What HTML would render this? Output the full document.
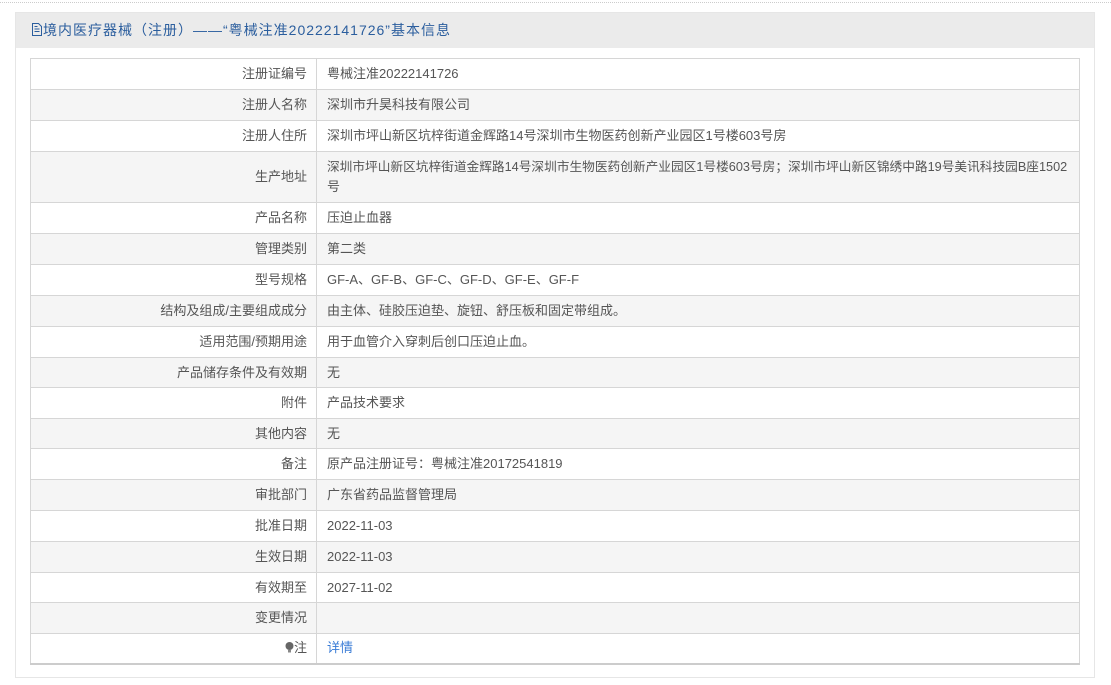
<!DOCTYPE html>
<html><head><meta charset="utf-8"><style>
*{margin:0;padding:0;box-sizing:border-box}
html,body{width:1111px;height:685px;background:#fff;overflow:hidden;font-family:"Liberation Sans","Noto Sans CJK SC",sans-serif;font-size:13px;color:#555}
.dot{position:absolute;left:0;top:2px;width:1111px;border-top:1px dotted #ccc}
.panel{position:absolute;left:15px;top:12px;width:1080px;height:666px;border:1px solid #e6e6e6;background:#fff}
.hd{height:35px;background:#ebebeb;color:#2b5e9e;font-size:14px;line-height:35px;padding-left:15px;letter-spacing:1px}
table{position:absolute;left:14px;top:45px;width:1050px;border-collapse:collapse;table-layout:fixed}
td{border:1px solid #d6d6d6;padding:0 10px;line-height:20px;vertical-align:middle;overflow:visible}
td.k{text-align:right;padding-right:9px}
tr:nth-child(even) td{background:#f5f5f5}
table{border-bottom:2px solid #ccc}
a{color:#3a7cd6;text-decoration:none}
</style></head><body>
<div class="dot"></div>
<div class="panel">
<div class="hd"><svg width="12" height="13" viewBox="0 0 12 13" style="vertical-align:-1px"><path d="M1.5 .5h6l3 3v9h-9z" fill="none" stroke="#2b5e9e"/><path d="M3.5 6h5M3.5 8.5h5M3.5 3.5h3" stroke="#2b5e9e"/></svg>境内医疗器械（注册）——“粤械注准20222141726”基本信息</div>
<table>
<colgroup><col style="width:286px"><col></colgroup>
<tr style="height:31px"><td class="k">注册证编号</td><td>粤械注准20222141726</td></tr>
<tr style="height:31px"><td class="k">注册人名称</td><td>深圳市升昊科技有限公司</td></tr>
<tr style="height:31px"><td class="k">注册人住所</td><td>深圳市坪山新区坑梓街道金辉路14号深圳市生物医药创新产业园区1号楼603号房</td></tr>
<tr style="height:51px"><td class="k">生产地址</td><td style="padding-right:0"><span style="white-space:nowrap;font-size:12.7px">深圳市坪山新区坑梓街道金辉路14号深圳市生物医药创新产业园区1号楼603号房；深圳市坪山新区锦绣中路19号美讯科技园B座1502</span><br>号</td></tr>
<tr style="height:31px"><td class="k">产品名称</td><td>压迫止血器</td></tr>
<tr style="height:31px"><td class="k">管理类别</td><td>第二类</td></tr>
<tr style="height:31px"><td class="k">型号规格</td><td>GF-A、GF-B、GF-C、GF-D、GF-E、GF-F</td></tr>
<tr style="height:31px"><td class="k">结构及组成/主要组成成分</td><td>由主体、硅胶压迫垫、旋钮、舒压板和固定带组成。</td></tr>
<tr style="height:31px"><td class="k">适用范围/预期用途</td><td>用于血管介入穿刺后创口压迫止血。</td></tr>
<tr style="height:30px"><td class="k">产品储存条件及有效期</td><td>无</td></tr>
<tr style="height:31px"><td class="k">附件</td><td>产品技术要求</td></tr>
<tr style="height:30px"><td class="k">其他内容</td><td>无</td></tr>
<tr style="height:31px"><td class="k">备注</td><td>原产品注册证号：粤械注准20172541819</td></tr>
<tr style="height:31px"><td class="k">审批部门</td><td>广东省药品监督管理局</td></tr>
<tr style="height:31px"><td class="k">批准日期</td><td>2022-11-03</td></tr>
<tr style="height:31px"><td class="k">生效日期</td><td>2022-11-03</td></tr>
<tr style="height:30px"><td class="k">有效期至</td><td>2027-11-02</td></tr>
<tr style="height:31px"><td class="k">变更情况</td><td></td></tr>
<tr style="height:30px"><td class="k"><svg width="9" height="11" viewBox="0 0 9 11" style="vertical-align:-1px"><circle cx="4.5" cy="4" r="4" fill="#666"/><rect x="3" y="8" width="3" height="2.5" fill="#888"/></svg>注</td><td><a>详情</a></td></tr>
</table>
</div>
</body></html>
